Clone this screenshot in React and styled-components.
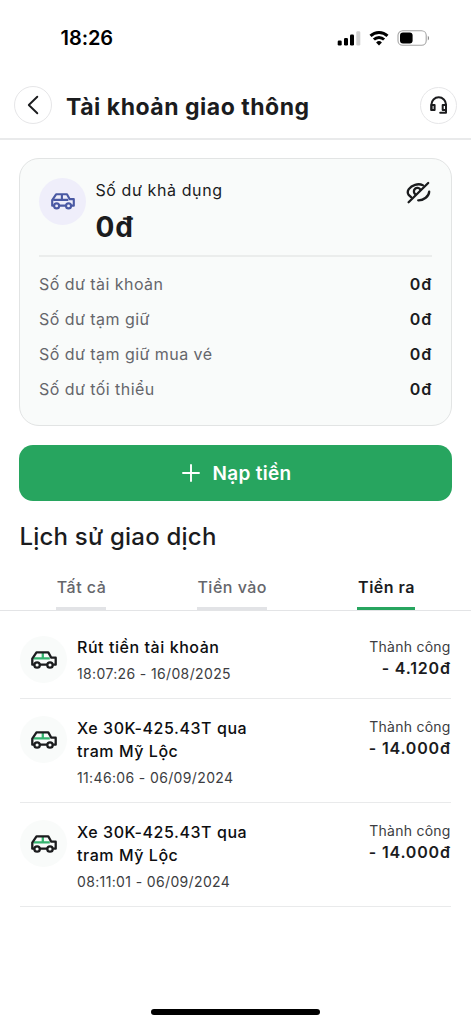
import React from 'react';
import styled, {createGlobalStyle} from 'styled-components';

const __GREEN = '#27a55f';
const __GRAY_LINE = '#e9eaeb';
const __TEXT = '#1b1c1e';
const __TEXT_MUTED = '#65666b';

const GlobalStyle = createGlobalStyle`
  * {
    box-sizing: border-box;
  }
  body {
    margin: 0;
    background: #fff;
    color: ${__TEXT};
    font-family: Inter, 'Liberation Sans', sans-serif;
  }
`;

const Screen = styled.div`
  display: flex;
  flex-direction: column;
  width: 471px;
  height: 1024px;
  overflow: hidden;
  background: #fff;
`;

const StatusBar = styled.div`
  display: flex;
  align-items: center;
  justify-content: space-between;
  height: 76px;
  padding: 0 41px 0 60.6px;
`;

const Time = styled.div`
  font-size: 20px;
  font-weight: 600;
  letter-spacing: -0.1px;
  color: #000;
`;

const Header = styled.header`
  display: flex;
  align-items: center;
  height: 64px;
  padding: 0 14px 4px 14px;
  border-bottom: 2px solid ${__GRAY_LINE};
`;

const RoundButton = styled.button`
  display: flex;
  align-items: center;
  justify-content: center;
  width: ${props => props.$size}px;
  height: ${props => props.$size}px;
  padding: 0;
  border: 1px solid #e6e6e8;
  border-radius: 50%;
  background: #fff;
`;

const PageTitle = styled.h1`
  flex: 1;
  margin: 0 0 0 14px;
  font-size: 23px;
  line-height: 30px;
  font-weight: 700;
  letter-spacing: 0.52px;
  padding-top: 3px;
`;

const Card = styled.section`
  height: 268px;
  margin: 18px 19px 0;
  padding: 19px;
  border: 1px solid #e2e4e4;
  border-radius: 20px;
  background: #f9fbfa;
`;

const CardTop = styled.div`
  display: flex;
  height: 79px;
  border-bottom: 2px solid #ebedec;
`;

const IconCircle = styled.div`
  display: flex;
  flex-shrink: 0;
  align-items: center;
  justify-content: center;
  width: 47px;
  height: 47px;
  border-radius: 50%;
  background: ${props => props.$background};
`;

const Balance = styled.div`
  flex: 1;
  margin-left: 9.4px;
`;

const BalanceLabel = styled.div`
  margin-top: 2px;
  font-size: 16px;
  line-height: 20px;
  letter-spacing: 0.6px;
`;

const BalanceValue = styled.div`
  margin-top: 10px;
  font-size: 28px;
  line-height: 34px;
  font-weight: 700;
  letter-spacing: 1px;
`;

const Details = styled.div`
  padding-top: 9px;
`;

const Detail = styled.div`
  display: flex;
  align-items: center;
  justify-content: space-between;
  height: 35.2px;
  font-size: 16px;
  letter-spacing: 0.45px;
  color: ${__TEXT_MUTED};
`;

const DetailValue = styled.span`
  font-weight: 600;
  letter-spacing: 0.8px;
  color: ${__TEXT};
`;

const TopUp = styled.button`
  display: flex;
  flex-shrink: 0;
  align-items: center;
  justify-content: center;
  gap: 13px;
  height: 56px;
  margin: 19px 19px 0;
  padding: 0 0 0 2px;
  border: none;
  border-radius: 14px;
  background: ${__GREEN};
  color: #fff;
  font-family: inherit;
  font-size: 19px;
  font-weight: 600;
  letter-spacing: 0.3px;
`;

const SectionTitle = styled.h2`
  margin: 20px 19.4px 0;
  font-size: 24px;
  line-height: 32px;
  font-weight: 500;
  letter-spacing: 0.22px;
`;

const Tabs = styled.nav`
  display: flex;
  flex-shrink: 0;
  align-items: flex-end;
  justify-content: space-between;
  height: 58px;
  padding: 0 56px;
  border-bottom: 1px solid #e3e4e6;
`;

const Tab = styled.div`
  height: 35px;
  padding: 0 0 0 0.8px;
  font-size: 16px;
  line-height: 24px;
  font-weight: ${props => (props.$active ? 600 : 500)};
  letter-spacing: 0.5px;
  color: ${props => (props.$active ? __TEXT : __TEXT_MUTED)};
  border-bottom: 3px solid ${props => (props.$active ? __GREEN : '#e2e3e6')};
`;

const Transactions = styled.ul`
  margin: 8px 20px 0;
  padding: 0;
  list-style: none;
`;

const Transaction = styled.li`
  display: flex;
  padding: 17px 0 14.2px;
  border-bottom: 1px solid ${__GRAY_LINE};
`;

const TransactionInfo = styled.div`
  flex: 1;
  margin-left: 10px;
  padding-top: 0.4px;
`;

const TransactionTitle = styled.div`
  max-width: 190px;
  font-size: 16px;
  line-height: 23.6px;
  font-weight: 500;
  letter-spacing: 0.56px;
  color: #0d0e10;
`;

const TransactionDate = styled.div`
  margin-top: 4.2px;
  font-size: 14px;
  line-height: 20px;
  letter-spacing: 0.36px;
  color: #3c3d41;
`;

const TransactionResult = styled.div`
  padding: 0.6px 0.3px 0 0;
  text-align: right;
`;

const Status = styled.div`
  font-size: 14px;
  line-height: 20px;
  letter-spacing: 0.25px;
  color: #3c3d41;
`;

const Amount = styled.div`
  font-size: 16px;
  line-height: 22px;
  font-weight: 600;
  letter-spacing: 0.8px;
`;

const HomeIndicator = styled.div`
  flex-shrink: 0;
  width: 169px;
  height: 6px;
  margin: auto auto 9px;
  border-radius: 3px;
  background: #000;
`;

const StatusIcons = () => (
  <svg width="93" height="18" viewBox="0 0 93 18">
    <rect x="0.7" y="11.5" width="4" height="5" rx="1.2" />
    <rect x="7" y="9" width="4" height="7.5" rx="1.2" />
    <rect x="13" y="5.5" width="4" height="11" rx="1.2" />
    <rect x="19.3" y="2.2" width="4" height="14.3" rx="1.2" fill="#d0d0d0" />
    <g fill="none" stroke="#000" strokeWidth="2.9">
      <path d="M33.5 6.9a12.2 12.2 0 0 1 17 0" />
      <path d="M36.9 10.6a7.2 7.2 0 0 1 10.2 0" />
    </g>
    <path d="M42 16.5l-2.9-3a4.2 4.2 0 0 1 5.8 0z" />
    <rect
      x="61"
      y="1.7"
      width="28.2"
      height="14.6"
      rx="4.6"
      fill="none"
      stroke="#a4a4a4"
      strokeWidth="1.1"
    />
    <rect x="63" y="3.6" width="12.6" height="10.8" rx="3" />
    <path d="M90.8 6.8v4.6c1.7-.8 1.7-3.8 0-4.6z" fill="#8a8a8a" />
  </svg>
);

const BackIcon = () => (
  <svg width="12" height="20" viewBox="0 0 12 20" fill="none">
    <path
      d="M10.3 1.7L1.8 10l8.5 8.3"
      stroke={__TEXT}
      strokeWidth="1.9"
      strokeLinecap="round"
      strokeLinejoin="round"
    />
  </svg>
);

const HeadsetIcon = () => (
  <svg
    width="18"
    height="18"
    viewBox="0 0 18 18"
    fill="none"
    stroke={__TEXT}
    strokeWidth="2"
    strokeLinecap="round"
    strokeLinejoin="round"
  >
    <path d="M1.4 14V8.6a7.3 7.3 0 0 1 14.6 0v8.2h-5.8" />
    <path d="M1.4 9h3.2v5H1.4zM12.7 9H16v5h-3.3z" />
  </svg>
);

const EyeSlashIcon = () => (
  <svg
    width="26"
    height="26"
    viewBox="0 0 26 26"
    fill="none"
    stroke={__TEXT}
    strokeWidth="2.3"
    strokeLinecap="round"
    strokeLinejoin="round"
  >
    <path d="M22.2 5L2.6 24.2" />
    <path d="M16.9 7.2C12 5 5.8 7 2.8 11.2c-1.4 2-1.3 4.2.1 6l2.2 2" />
    <path d="M14.4 11.6a3.5 3.5 0 1 0-4.8 4.8" />
    <path d="M23.2 13.6c-.2 4.6-5.4 8.9-11 8.7" />
  </svg>
);

const CarIcon = ({width, color, accent}) => (
  <svg
    width={width}
    height={(width * 18) / 26}
    viewBox="0 0 26 18"
    fill="none"
    stroke={color}
    strokeWidth="2.3"
    strokeLinejoin="round"
  >
    <path d="M2.4 7.4h16.4M11.8 1.5v5.9" stroke={accent} />
    <path d="M3.2 13.7H1.3V7.7L5.5 1.4h11.8l3 5.3h4.4v7h-2.6M9 13.7h7.2" />
    <circle cx="6.1" cy="14" r="2.7" />
    <circle cx="19" cy="14" r="2.7" />
  </svg>
);

const PlusIcon = () => (
  <svg width="18" height="18" viewBox="0 0 18 18">
    <path
      d="M9 1v16M1 9h16"
      stroke="#fff"
      strokeWidth="1.9"
      strokeLinecap="round"
    />
  </svg>
);

const details = [
  {label: 'Số dư tài khoản', value: '0đ'},
  {label: 'Số dư tạm giữ', value: '0đ'},
  {label: 'Số dư tạm giữ mua vé', value: '0đ'},
  {label: 'Số dư tối thiểu', value: '0đ'}
];

const tabs = ['Tất cả', 'Tiền vào', 'Tiền ra'];

const transactions = [
  {
    title: 'Rút tiền tài khoản',
    date: '18:07:26 - 16/08/2025',
    amount: '- 4.120đ'
  },
  {
    title: 'Xe 30K-425.43T qua tram Mỹ Lộc',
    date: '11:46:06 - 06/09/2024',
    amount: '- 14.000đ'
  },
  {
    title: 'Xe 30K-425.43T qua tram Mỹ Lộc',
    date: '08:11:01 - 06/09/2024',
    amount: '- 14.000đ'
  }
];

class App extends React.Component {
  constructor() {
    super();
    this.state = {
      activeTab: 'Tiền ra'
    };
  }

  render() {
    return (
      <Screen>
        <GlobalStyle />
        <StatusBar>
          <Time>18:26</Time>
          <StatusIcons />
        </StatusBar>
        <Header>
          <RoundButton $size={38}>
            <BackIcon />
          </RoundButton>
          <PageTitle>Tài khoản giao thông</PageTitle>
          <RoundButton $size={37}>
            <HeadsetIcon />
          </RoundButton>
        </Header>

        <Card>
          <CardTop>
            <IconCircle $background="#efeefa">
              <CarIcon width={24} color="#4a59a3" accent="#4a59a3" />
            </IconCircle>
            <Balance>
              <BalanceLabel>Số dư khả dụng</BalanceLabel>
              <BalanceValue>0đ</BalanceValue>
            </Balance>
            <EyeSlashIcon />
          </CardTop>
          <Details>
            {details.map(detail => (
              <Detail key={detail.label}>
                {detail.label}
                <DetailValue>{detail.value}</DetailValue>
              </Detail>
            ))}
          </Details>
        </Card>

        <TopUp>
          <PlusIcon />
          Nạp tiền
        </TopUp>

        <SectionTitle>Lịch sử giao dịch</SectionTitle>
        <Tabs>
          {tabs.map(tab => (
            <Tab
              key={tab}
              $active={tab === this.state.activeTab}
              onClick={() => this.setState({activeTab: tab})}
            >
              {tab}
            </Tab>
          ))}
        </Tabs>

        <Transactions>
          {transactions.map(transaction => (
            <Transaction key={transaction.date}>
              <IconCircle $background="#f9fbfa">
                <CarIcon width={26} color={__TEXT} accent="#35b36f" />
              </IconCircle>
              <TransactionInfo>
                <TransactionTitle>{transaction.title}</TransactionTitle>
                <TransactionDate>{transaction.date}</TransactionDate>
              </TransactionInfo>
              <TransactionResult>
                <Status>Thành công</Status>
                <Amount>{transaction.amount}</Amount>
              </TransactionResult>
            </Transaction>
          ))}
        </Transactions>
        <HomeIndicator />
      </Screen>
    );
  }
}

export default App;
